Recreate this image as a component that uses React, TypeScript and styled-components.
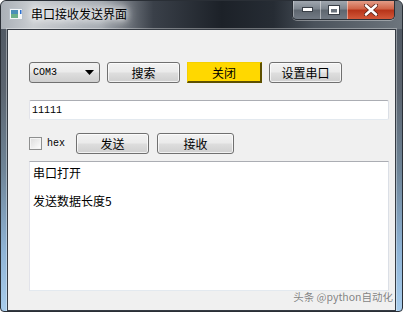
import React from "react";
import styled, { createGlobalStyle } from "styled-components";

const Global = createGlobalStyle`
  html, body { margin: 0; padding: 0; background: #ffffff; }
  body { width: 403px; height: 312px; overflow: hidden; font-family: "Noto Sans CJK SC", "Noto Sans", sans-serif; }
  * { box-sizing: border-box; }
`;

const cjk = `"Noto Sans CJK SC", "Noto Sans", sans-serif`;
const mono = `"Liberation Mono", "DejaVu Sans Mono", monospace`;

const Window = styled.div`
  position: relative;
  width: 403px;
  height: 312px;
  display: flex;
  flex-direction: column;
  border-radius: 6px 6px 4px 4px;
  border: 1px solid #2a2f36;
  background:
    linear-gradient(to bottom, #4c545e 0px, #5c6570 90px, #6f8598 170px, #8fb4d6 250px, #a9cdec 312px);
  overflow: hidden;
`;

const TitleBar = styled.div`
  height: 28px;
  flex: none;
  display: flex;
  align-items: flex-start;
  background: linear-gradient(90deg, #aab0b7 0%, #c9cdd1 8%, #a2a8af 25%, #3a4049 38%, #1c2128 55%, #262c34 68%, #4a525b 78%, #6d757d 100%);
`;

const AppIcon = styled.svg`
  margin: 7px 0 0 8px;
  flex: none;
`;

const Title = styled.div`
  margin: 5px 0 0 8px;
  font-family: ${cjk};
  font-size: 12px;
  line-height: 16px;
  color: #000;
  text-shadow: 0 0 6px #fff, 0 0 10px #fff, 0 0 14px rgba(255,255,255,0.9);
`;

const Controls = styled.div`
  margin-left: auto;
  margin-right: 7px;
  margin-top: -1px;
  display: flex;
  height: 20px;
  border: 1px solid #2a2f36;
  border-top: none;
  border-radius: 0 0 5px 5px;
  overflow: hidden;
  box-shadow: 0 1px 0 rgba(255,255,255,0.35);
`;

const CtlButton = styled.div<{ $w: number; $close?: boolean }>`
  width: ${(p) => p.$w}px;
  height: 19px;
  display: flex;
  align-items: center;
  justify-content: center;
  border-left: 1px solid rgba(255,255,255,0.45);
  &:first-child { border-left: 1px solid rgba(255,255,255,0.35); }
  background: ${(p) =>
    p.$close
      ? "linear-gradient(to bottom, #e4a38f 0%, #d0664a 45%, #b8351a 55%, #d3593a 100%)"
      : "linear-gradient(to bottom, #a4abb3 0%, #7f8790 45%, #5f6770 55%, #727a84 100%)"};
  box-shadow: inset 0 1px 0 rgba(255,255,255,0.45);
`;

const Client = styled.div`
  margin: 0 6px;
  flex: 1;
  display: flex;
  flex-direction: column;
  background: #f0f0f0;
  border: 1px solid #353b43;
  box-shadow: 0 0 0 1px rgba(255,255,255,0.35);
  padding: 32px 6px 0 21px;
`;

const Row = styled.div<{ $top: number; $gap: number }>`
  margin-top: ${(p) => p.$top}px;
  display: flex;
  align-items: center;
  gap: ${(p) => p.$gap}px;
`;

const Combo = styled.div`
  width: 71px;
  height: 21px;
  border: 1px solid #707070;
  border-radius: 3px;
  background: linear-gradient(to bottom, #f2f2f2 0%, #ebebeb 45%, #dddddd 55%, #cfcfcf 100%);
  display: flex;
  align-items: center;
  padding: 0 5px 0 3px;
  font-family: ${mono};
  font-size: 10px;
  color: #000;
`;

const Caret = styled.svg`
  margin-left: auto;
`;

const Button = styled.div<{ $w: number }>`
  width: ${(p) => p.$w}px;
  height: 21px;
  border: 1px solid #707070;
  border-radius: 3px;
  background: linear-gradient(to bottom, #f2f2f2 0%, #ebebeb 45%, #dddddd 55%, #cfcfcf 100%);
  box-shadow: inset 0 0 0 1px rgba(255,255,255,0.7);
  display: flex;
  align-items: center;
  justify-content: center;
  font-family: ${cjk};
  font-size: 12px;
  color: #000;
`;

const YellowButton = styled.div<{ $w: number }>`
  width: ${(p) => p.$w}px;
  height: 21px;
  background: #ffd800;
  border-top: 1px solid #f5d000;
  border-left: 1px solid #f5d000;
  border-right: 2px solid #5e5000;
  border-bottom: 2px solid #5e5000;
  display: flex;
  align-items: center;
  justify-content: center;
  font-family: ${cjk};
  font-size: 12px;
  color: #000;
`;

const Input = styled.div`
  margin-top: 17px;
  height: 20px;
  border: 1px solid #abadb3;
  border-left-color: #e2e3ea;
  border-right-color: #dbdfe6;
  border-bottom-color: #e3e9ef;
  border-radius: 2px;
  background: #fff;
  display: flex;
  align-items: center;
  padding-left: 2px;
  font-family: ${mono};
  font-size: 10px;
  color: #000;
`;

const CheckLabel = styled.div`
  display: flex;
  align-items: center;
  gap: 5px;
  font-family: ${mono};
  font-size: 10px;
  color: #000;
  width: 39px;
`;

const CheckBox = styled.div`
  width: 13px;
  height: 13px;
  border: 1px solid #8e8f8f;
  background: linear-gradient(135deg, #dcdcdc 0%, #f0f0f0 60%, #ffffff 100%);
  box-shadow: inset 0 0 0 1px #f4f4f4;
`;

const TextArea = styled.div`
  margin-top: 7px;
  height: 130px;
  border: 1px solid #abadb3;
  border-left-color: #e2e3ea;
  border-right-color: #dbdfe6;
  border-bottom-color: #e3e9ef;
  background: #fff;
  padding: 4px 3px;
  display: flex;
  flex-direction: column;
  gap: 14px;
  font-family: ${cjk};
  font-size: 12px;
  line-height: 14px;
  color: #000;
`;

const Watermark = styled.div`
  position: absolute;
  right: 9px;
  bottom: 8px;
  font-family: ${cjk};
  font-size: 10.5px;
  line-height: 12px;
  color: rgba(80, 80, 80, 0.7);
`;

export default function App() {
  return (
    <>
      <Global />
      <Window>
        <TitleBar>
          <AppIcon width="14" height="12" viewBox="0 0 14 12">
            <rect x="0.5" y="0.5" width="13" height="11" fill="#f4f6f8" stroke="#b8c0c8" />
            <rect x="2" y="2" width="7" height="8" fill="#4a8fb8" />
            <rect x="2" y="6" width="7" height="4" fill="#6cb08a" />
            <rect x="11" y="2" width="1.5" height="4" fill="#2a6fd0" />
          </AppIcon>
          <Title>串口接收发送界面</Title>
          <Controls>
            <CtlButton $w={27}>
              <svg width="11" height="5" viewBox="0 0 11 5">
                <rect x="0.5" y="0.5" width="10" height="4" fill="#fff" stroke="#3a4048" strokeWidth="1" />
              </svg>
            </CtlButton>
            <CtlButton $w={27}>
              <svg width="12" height="10" viewBox="0 0 12 10">
                <rect x="0.5" y="0.5" width="11" height="9" fill="#fff" stroke="#3a4048" />
                <rect x="3" y="4" width="6" height="3.5" fill="#6a727c" />
              </svg>
            </CtlButton>
            <CtlButton $w={47} $close>
              <svg width="14" height="12" viewBox="0 0 14 12">
                <path d="M2 1.5 L12 10.5 M12 1.5 L2 10.5" stroke="#5a2418" strokeWidth="4.2" strokeLinecap="round" />
                <path d="M2 1.5 L12 10.5 M12 1.5 L2 10.5" stroke="#ffffff" strokeWidth="2.6" strokeLinecap="round" />
              </svg>
            </CtlButton>
          </Controls>
        </TitleBar>
        <Client>
          <Row $top={0} $gap={7}>
            <Combo>
              COM3
              <Caret width="9" height="5" viewBox="0 0 9 5">
                <path d="M0 0 H9 L4.5 5 Z" fill="#000" />
              </Caret>
            </Combo>
            <Button $w={73}>搜索</Button>
            <YellowButton $w={75}>关闭</YellowButton>
            <Button $w={73}>设置串口</Button>
          </Row>
          <Input>11111</Input>
          <Row $top={13} $gap={8}>
            <CheckLabel>
              <CheckBox />
              hex
            </CheckLabel>
            <Button $w={73}>发送</Button>
            <Button $w={77}>接收</Button>
          </Row>
          <TextArea>
            <div>串口打开</div>
            <div>发送数据长度5</div>
          </TextArea>
        </Client>
        <Watermark>头条 @python自动化</Watermark>
      </Window>
    </>
  );
}
